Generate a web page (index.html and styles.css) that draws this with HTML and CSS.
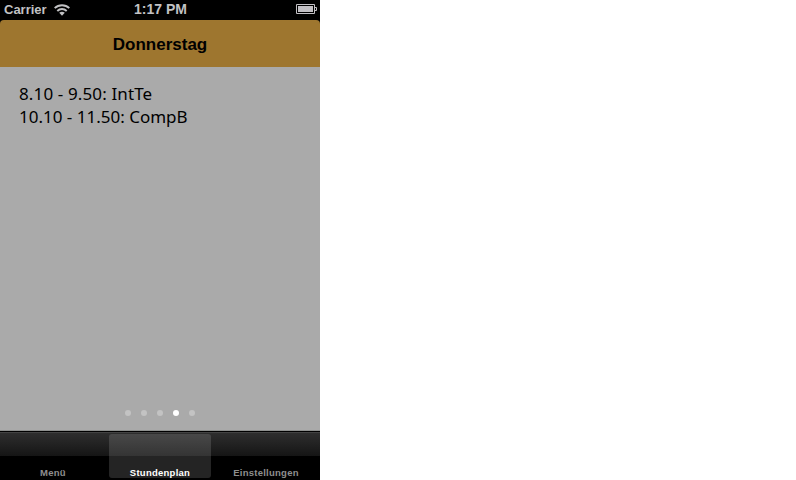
FILE: index.html
```html
<!DOCTYPE html>
<html lang="de">
<head>
<meta charset="utf-8">
<title>Stundenplan</title>
<link rel="stylesheet" href="styles.css">
</head>
<body>
<div class="phone">
  <header class="status">
    <div class="carrier"><span class="carrier-name">Carrier</span>
      <svg class="wifi" width="16" height="12" viewBox="0 0 16 12" fill="none" stroke="#c2c2c4" stroke-width="1.9"><path d="M.7 4.2C4.7.2 11.3.2 15.3 4.2M3.3 7C6 4.4 10 4.4 12.7 7"/><path d="M5.2 8.8Q8 6.6 10.8 8.8L8 11.8Z" fill="#c2c2c4" stroke="none"/></svg>
    </div>
    <span class="clock">1:17 PM</span>
    <svg class="battery" width="21" height="10" viewBox="0 0 21 10"><path d="M.5.5h18v9H.5zM18.5 3.5h2v3h-2" fill="none" stroke="#c2c0c4"/><path d="M2 2h15v6H2z" fill="#c2c0c4"/></svg>
  </header>
  <div class="nav"><h1 class="title">Donnerstag</h1></div>
  <main class="page">
    <ul class="lessons">
      <li class="first">8.10 - 9.50: IntTe</li>
      <li class="second">10.10 - 11.50: CompB</li>
    </ul>
    <div class="dots"><i class="dot"></i><i class="dot"></i><i class="dot"></i><i class="dot on"></i><i class="dot"></i></div>
  </main>
  <nav class="tabs">
    <div class="tab menu">Menü</div>
    <div class="tab active">Stundenplan</div>
    <div class="tab">Einstellungen</div>
  </nav>
</div>
</body>
</html>
```
FILE: styles.css
```css
* { box-sizing: border-box; }
body { margin: 0; background: #fff; font-family: "Liberation Sans", Arial, sans-serif; }
.phone { width: 320px; height: 480px; background: #000; display: flex; flex-direction: column; }
.status { height: 20px; display: grid; grid-template-columns: 1fr auto 1fr; color: #c2c2c4; font-size: 13px; font-weight: bold; line-height: 19px; padding: 0 3px 0 4px; }
.carrier { display: flex; gap: 7px; }
.carrier-name { width: 43px; }
.wifi { margin-top: 4px; }
.battery { justify-self: end; margin-top: 4px; }
.clock { font-size: 14px; }
.nav { height: 47px; background: #9e762f; border-radius: 4px 4px 0 0; display: flex; align-items: center; justify-content: center; }
.title { margin: 2px 0 0; font-size: 17px; line-height: 20px; color: #000; }
.page { height: 364px; background: #aaa; border-bottom: 1px solid #8e908e; display: flex; flex-direction: column; justify-content: space-between; padding: 15px 19px 14px; }
.lessons { list-style: none; margin: 0; padding: 0; font-family: "Noto Sans", sans-serif; font-size: 17px; line-height: 23px; color: #000; white-space: nowrap; }
.first { letter-spacing: .13px; }
.dots { display: flex; justify-content: center; gap: 10px; }
.dot { width: 6px; height: 6px; border-radius: 50%; background: #c3c3c3; }
.dot.on { background: #fff; }
.tabs { height: 49px; border-top: 1px solid #000; background: linear-gradient(#434343 0 1px, #2e2e2e 1px, #151515 24px, #000 24px); display: grid; grid-template-columns: 102px 102px 102px; column-gap: 4px; justify-content: center; padding: 2px 0; color: #8e8e8e; font-size: 9.5px; font-weight: bold; letter-spacing: .25px; }
.tab { display: flex; align-items: flex-end; justify-content: center; line-height: 11px; border-radius: 3px; }
.menu { padding-right: 2px; }
.active { color: #fff; background: linear-gradient(#484848, #343434 22px, #242424 22px); }
```
